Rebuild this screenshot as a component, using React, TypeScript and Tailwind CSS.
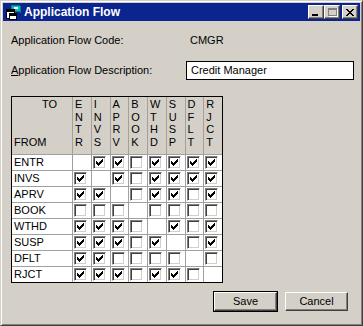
import React from 'react';

const codes = ['ENTR', 'INVS', 'APRV', 'BOOK', 'WTHD', 'SUSP', 'DFLT', 'RJCT'];

// 1 = checked, 0 = unchecked, null = same state (no box)
const flow: (0 | 1 | null)[][] = [
  [null, 1, 1, 0, 1, 1, 1, 1],
  [1, null, 1, 0, 1, 1, 1, 1],
  [1, 1, null, 0, 1, 1, 0, 1],
  [0, 0, 0, null, 0, 0, 0, 0],
  [1, 1, 1, 0, null, 1, 0, 1],
  [1, 1, 1, 0, 1, null, 0, 1],
  [1, 1, 0, 0, 0, 0, null, 0],
  [1, 1, 1, 0, 1, 1, 0, null],
];

function CheckMark() {
  // classic 7x7 pixel check
  const cols = [2, 3, 4, 3, 2, 1, 0];
  return (
    <svg width="7" height="7" viewBox="0 0 7 7" shapeRendering="crispEdges" className="absolute left-[2px] top-[2px]">
      {cols.map((y, x) => (
        <rect key={x} x={x} y={y} width="1" height="3" fill="#000" />
      ))}
    </svg>
  );
}

function Checkbox({ checked }: { checked: boolean }) {
  return (
    <div className="relative w-[13px] h-[13px] bg-white border border-t-[#808080] border-l-[#808080] border-r-white border-b-white shadow-[inset_1px_1px_0_#404040,inset_-1px_-1px_0_#d4d0c8]">
      {checked && <CheckMark />}
    </div>
  );
}

function CaptionButton({ children, className = '' }: { children: React.ReactNode; className?: string }) {
  return (
    <div className={`relative w-[16px] h-[14px] bg-[#d4d0c8] border border-t-white border-l-white border-r-[#404040] border-b-[#404040] shadow-[inset_-1px_-1px_0_#808080] ${className}`}>
      {children}
    </div>
  );
}

function AppIcon() {
  return (
    <svg width="16" height="16" viewBox="0 0 16 16" shapeRendering="crispEdges">
      <polygon points="6,1 15,2 15,8 6,7" fill="#00c0c0" stroke="#008080" strokeWidth="1" />
      <rect x="9" y="3" width="4" height="2" fill="#ffffff" />
      <rect x="1.5" y="5.5" width="8" height="9" fill="#ffffff" stroke="#000" />
      <rect x="2" y="6" width="7" height="2" fill="#000" />
      <rect x="4.5" y="9.5" width="7" height="6" fill="#ffffff" stroke="#000" />
      <rect x="5" y="10" width="6" height="2" fill="#000" />
    </svg>
  );
}

function Win98Button({ label, isDefault }: { label: string; isDefault?: boolean }) {
  const inner = (
    <div className="w-[63px] h-[19px] flex items-center justify-center bg-[#d4d0c8] border border-t-white border-l-white border-r-[#404040] border-b-[#404040] shadow-[inset_-1px_-1px_0_#808080,inset_1px_1px_0_#d4d0c8]">
      {label}
    </div>
  );
  if (isDefault) {
    return <div className="border border-black">{inner}</div>;
  }
  return inner;
}

export default function App() {
  return (
    <div
      className="w-[363px] h-[326px] bg-[#d4d0c8] border border-t-[#d4d0c8] border-l-[#d4d0c8] border-r-[#404040] border-b-[#404040] shadow-[inset_1px_1px_0_#fff,inset_-1px_-1px_0_#808080] p-[2px] flex flex-col text-[11px] text-black"
      style={{ fontFamily: '"Liberation Sans", Arial, sans-serif' }}
    >
      {/* Title bar */}
      <div className="h-[18px] bg-[#0a2490] flex items-center pl-[2px] pr-[2px] shrink-0">
        <AppIcon />
        <span className="ml-[3px] text-white font-bold text-[12px] leading-none">Application Flow</span>
        <div className="ml-auto flex items-center">
          <CaptionButton>
            <div className="absolute left-[3px] top-[8px] w-[6px] h-[2px] bg-black" />
          </CaptionButton>
          <CaptionButton>
            <div className="absolute left-[3px] top-[2px] w-[9px] h-[8px] border border-t-2 border-[#808080] shadow-[1px_1px_0_#fff]" />
          </CaptionButton>
          <CaptionButton className="ml-[2px]">
            <svg width="8" height="7" viewBox="0 0 8 7" shapeRendering="crispEdges" className="absolute left-[3px] top-[2.5px]">
              {[0, 1, 2, 3, 4, 5, 6].map((i) => (
                <React.Fragment key={i}>
                  <rect x={i} y={i} width="2" height="1" fill="#000" />
                  <rect x={6 - i} y={i} width="2" height="1" fill="#000" />
                </React.Fragment>
              ))}
            </svg>
          </CaptionButton>
        </div>
      </div>

      {/* Body */}
      <div className="flex flex-col pl-[8px]">
        <div className="mt-[13px] h-[13px] leading-[13px] flex">
          <span className="w-[179px]">Application Flow Code:</span>
          <span>CMGR</span>
        </div>

        <div className="mt-[14px] h-[19px] flex items-center">
          <span className="w-[175px]">
            <span className="underline">A</span>pplication Flow Description:
          </span>
          <div className="w-[168px] h-[19px] bg-white border border-black flex items-center pl-[4px]">
            Credit Manager
          </div>
        </div>

        {/* Flow matrix */}
        <div className="mt-[16px] w-fit grid grid-cols-[60px_repeat(8,17.75px)] grid-rows-[57px_repeat(8,15px)] gap-px bg-[#a0a0a0] border border-black">
          <div className="bg-[#d4d0c8] leading-[12.7px] pt-[1px] pl-[2px] flex flex-col">
            <span className="pl-[28px]">TO</span>
            <span>&nbsp;</span>
            <span>&nbsp;</span>
            <span>FROM</span>
          </div>
          {codes.map((c) => (
            <div key={c} className="bg-[#d4d0c8] leading-[12.7px] pt-[1px] pl-[2px] flex flex-col">
              {c.split('').map((ch, i) => (
                <span key={i}>{ch}</span>
              ))}
            </div>
          ))}

          {codes.map((from, r) => (
            <React.Fragment key={from}>
              <div className="bg-white pl-[2px] leading-[15px]">{from}</div>
              {flow[r].map((v, c) => (
                <div key={c} className="bg-white pl-[1px] pt-[1px]">
                  {v !== null && <Checkbox checked={v === 1} />}
                </div>
              ))}
            </React.Fragment>
          ))}
        </div>

        <div className="mt-[8px] flex items-center justify-end pr-[12px] gap-[7px]">
          <Win98Button label="Save" isDefault />
          <Win98Button label="Cancel" />
        </div>
      </div>
    </div>
  );
}
